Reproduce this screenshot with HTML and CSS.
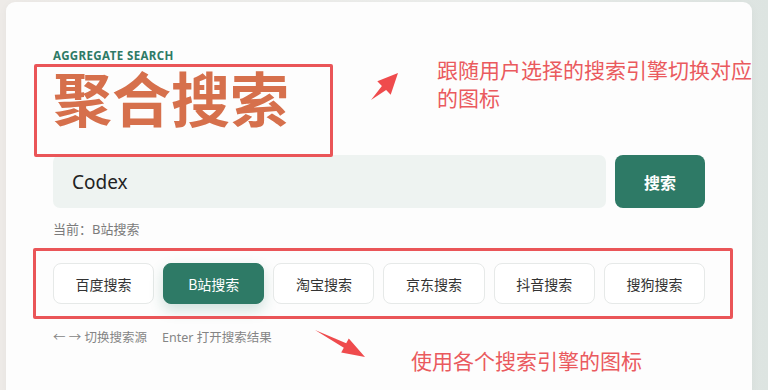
FILE: index.html
```html
<!DOCTYPE html>
<html lang="zh-CN">
<head>
    <meta charset="UTF-8">
    <meta name="viewport" content="width=device-width, initial-scale=1.0">
    <title>聚合搜索</title>
    <link rel="stylesheet" href="styles.css">
</head>
<body>
    <div class="card">
        <p class="eyebrow">AGGREGATE SEARCH</p>
        <h1 class="title">聚合搜索</h1>

        <form class="search" onsubmit="return false;">
            <input class="search-input" type="text" value="Codex">
            <button class="search-btn" type="submit">搜索</button>
        </form>

        <p class="current">当前：B站搜索</p>

        <div class="engines">
            <button class="engine">百度搜索</button>
            <button class="engine on">B站搜索</button>
            <button class="engine">淘宝搜索</button>
            <button class="engine">京东搜索</button>
            <button class="engine">抖音搜索</button>
            <button class="engine">搜狗搜索</button>
        </div>

        <p class="hint"><span>← → 切换搜索源</span><span>Enter 打开搜索结果</span></p>
    </div>

    <!-- 标注层 -->
    <div class="mark mark-title"></div>
    <div class="mark mark-engines"></div>
    <p class="note note-top">跟随用户选择的搜索引擎切换对应<br>的图标</p>
    <p class="note note-bottom">使用各个搜索引擎的图标</p>
    <svg class="arrows" width="768" height="390" viewBox="0 0 768 390">
        <polygon points="371,100 381.9,85.9 377.3,81.3 398,73 390.7,94.7 386.1,90.1" />
        <polygon points="315,330 346.2,343.3 348.8,338.5 365,357 341.2,352.5 343.8,347.7" />
    </svg>
</body>
</html>
```

FILE: styles.css
```css
* {
    padding: 0;
    margin: 0;
    box-sizing: border-box;
}

body {
    width: 768px;
    height: 390px;
    overflow: hidden;
    background: linear-gradient(90deg, #eeebe8 0%, #eceeec 60%, #dde4e1 100%);
    font-family: "Noto Sans", "Noto Sans CJK SC", sans-serif;
    color: #2b2b2b;
}

.card {
    width: 746px;
    height: 400px;
    margin: 2px 0 0 6px;
    padding: 46px 47px 0;
    background: #fdfdfd;
    border-radius: 9px;
    box-shadow: 0 2px 10px rgba(0, 0, 0, .04);
}

.eyebrow {
    font-size: 11.5px;
    line-height: 16px;
    font-weight: 700;
    letter-spacing: .4px;
    color: #2e7a66;
}

.title {
    margin-top: 3px;
    font-family: "Noto Sans CJK SC", sans-serif;
    font-size: 59px;
    line-height: 60px;
    font-weight: 700;
    color: #d6704c;
}

.search {
    display: flex;
    gap: 9px;
    margin-top: 28px;
    height: 53px;
}

.search-input {
    flex: 1;
    border: none;
    outline: none;
    border-radius: 7px;
    background: #eef3f1;
    padding: 0 19px;
    font-family: "Noto Sans", sans-serif;
    font-size: 19px;
    color: #222;
}

.search-btn {
    width: 90px;
    border: none;
    border-radius: 8px;
    background: #2e7a66;
    color: #fff;
    font-family: "Noto Sans CJK SC", sans-serif;
    font-size: 16px;
    font-weight: 700;
}

.current {
    margin-top: 12px;
    font-size: 13px;
    line-height: 18px;
    color: #7b7b7b;
}

.engines {
    display: grid;
    grid-template-columns: repeat(6, 1fr);
    gap: 9px;
    margin-top: 25px;
}

.engine {
    height: 41px;
    border: 1px solid #e6e9e8;
    border-radius: 8px;
    background: #fff;
    font-family: "Noto Sans CJK SC", sans-serif;
    font-size: 14px;
    color: #333;
}

.engine.on {
    background: #2e7a66;
    border-color: #2e7a66;
    color: #fff;
    box-shadow: 0 6px 14px rgba(46, 122, 102, .22);
}

.hint {
    margin-top: 25px;
    font-size: 12.5px;
    line-height: 18px;
    color: #858585;
}

.hint span {
    margin-right: 15px;
}

/* 标注 */
.mark {
    position: absolute;
    border: 3px solid #ea5558;
    border-radius: 2px;
}

.mark-title {
    left: 34px;
    top: 64px;
    width: 299px;
    height: 93px;
}

.mark-engines {
    left: 33px;
    top: 248px;
    width: 700px;
    height: 71px;
}

.note {
    position: absolute;
    font-family: "Noto Sans CJK SC", sans-serif;
    font-size: 21px;
    line-height: 28px;
    color: #ea5a5e;
}

.note-top {
    left: 437px;
    top: 55px;
}

.note-bottom {
    left: 411px;
    top: 346px;
}

.arrows {
    position: absolute;
    left: 0;
    top: 0;
}

.arrows polygon {
    fill: #ef4b4d;
}
```
